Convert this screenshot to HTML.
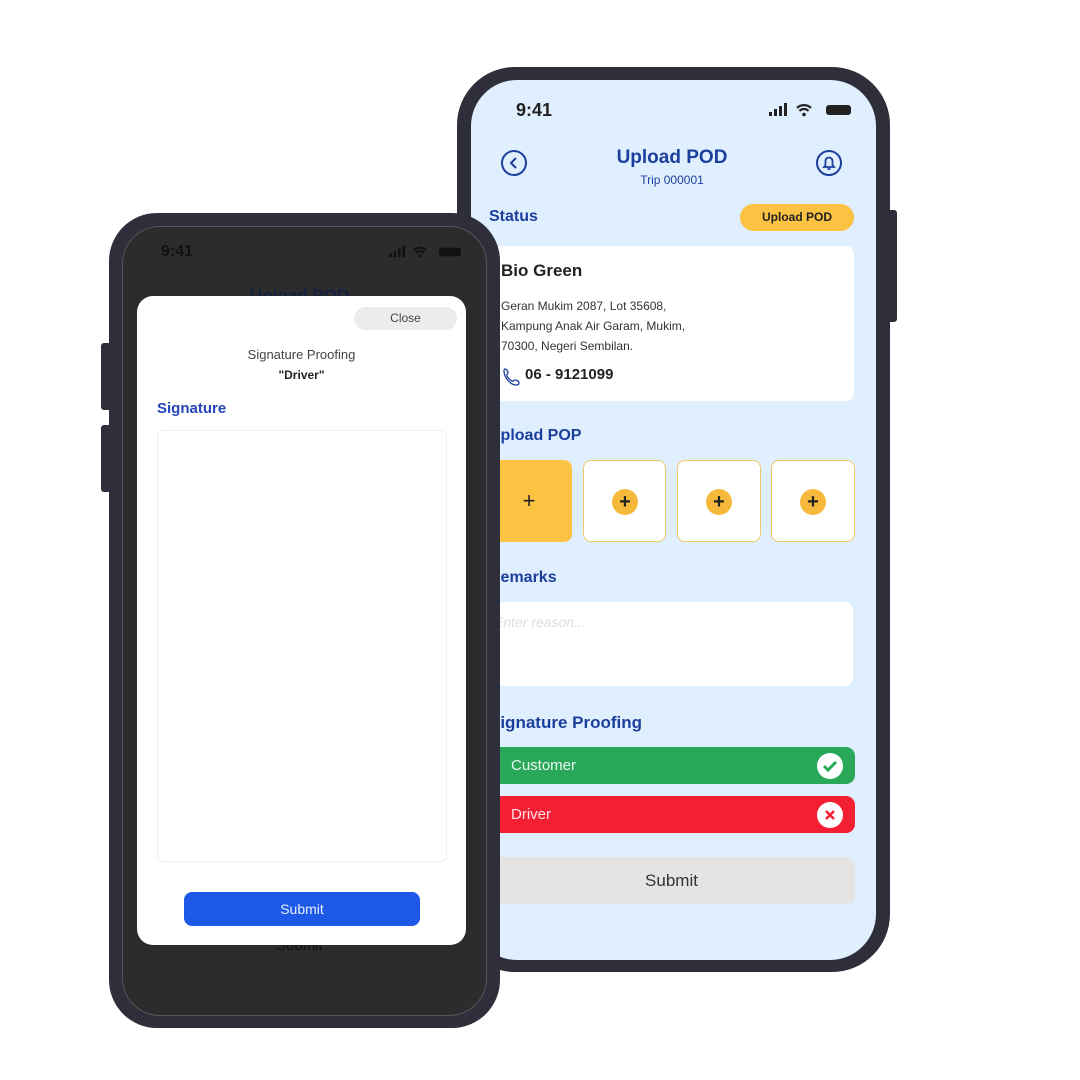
<!DOCTYPE html>
<html><head><meta charset="utf-8"><style>
*{margin:0;padding:0;box-sizing:border-box}
body{width:1080px;height:1080px;background:#fff;position:relative;overflow:hidden;font-family:"Liberation Sans",sans-serif}
.a{position:absolute}
.blue{color:#1c3f9e;font-weight:bold}
</style></head><body>
<!-- right phone -->
<div class="a" style="left:887px;top:210px;width:10px;height:112px;background:#2f2f3b;border-radius:3px"></div>
<div class="a" style="left:457px;top:67px;width:433px;height:905px;background:#2f2f3b;border-radius:58px"></div>
<div class="a" style="left:471px;top:80px;width:405px;height:880px;background:#e0effd;border-radius:46px;overflow:hidden">
</div>
<div class="a" style="left:516px;top:100px;font-size:18px;font-weight:bold;color:#222">9:41</div>
<svg class="a" style="left:768px;top:102px" width="86" height="16" viewBox="0 0 86 16"><rect x="1" y="10" width="3" height="4" fill="#222"/><rect x="6" y="7" width="3" height="7" fill="#222"/><rect x="11" y="4" width="3" height="10" fill="#222"/><rect x="16" y="1" width="3" height="13" fill="#222"/><path d="M29 6a10 10 0 0 1 14 0M31.5 9a6 6 0 0 1 9 0" stroke="#222" stroke-width="2.2" fill="none"/><circle cx="36" cy="12.5" r="1.8" fill="#222"/><rect x="58" y="3" width="25" height="10" rx="3" fill="#222"/></svg>
<svg class="a" style="left:500px;top:149px" width="28" height="28"><circle cx="14" cy="14" r="12" stroke="#1c3f9e" stroke-width="2" fill="none"/><path d="M16 9l-5 5 5 5" stroke="#1c3f9e" stroke-width="2" fill="none"/></svg>
<svg class="a" style="left:815px;top:149px" width="28" height="28"><circle cx="14" cy="14" r="12" stroke="#1c3f9e" stroke-width="2" fill="none"/><path d="M9 18h10l-1.5-2v-4a3.5 3.5 0 0 0-7 0v4z M12.5 20h3" stroke="#1c3f9e" stroke-width="1.8" fill="none"/></svg>
<div class="a blue" style="left:572px;top:147px;width:200px;text-align:center;font-size:19px">Upload POD</div>
<div class="a" style="left:572px;top:173px;width:200px;text-align:center;font-size:12px;color:#1c3f9e">Trip 000001</div>
<div class="a blue" style="left:489px;top:208px;font-size:16px">Status</div>
<div class="a" style="left:740px;top:204px;width:114px;height:27px;background:#fcc242;border-radius:14px;font-size:12px;font-weight:bold;color:#222;text-align:center;line-height:27px">Upload POD</div>
<div class="a" style="left:480px;top:246px;width:374px;height:155px;background:#fff;border-radius:8px"></div>
<div class="a" style="left:501px;top:261px;font-size:17px;font-weight:bold;color:#222">Bio Green</div>
<div class="a" style="left:501px;top:296px;font-size:12px;line-height:20px;color:#333">Geran Mukim 2087, Lot 35608,<br>Kampung Anak Air Garam, Mukim,<br>70300, Negeri Sembilan.</div>
<svg class="a" style="left:502px;top:366px" width="20" height="20"><path d="M3 3c2 0 3 3 3 4s-2 1-1 3 3 4 5 5 2-1 3-1 4 1 4 3-2 2-3 2C9 19 2 12 2 5c0-1 0-2 1-2z" stroke="#1c3f9e" stroke-width="1.3" fill="none"/></svg>
<div class="a" style="left:525px;top:366px;font-size:15px;font-weight:bold;color:#222">06 - 9121099</div>
<div class="a blue" style="left:489px;top:427px;font-size:16px">Upload POP</div>
<div class="a" style="left:486px;top:460px;width:86px;height:82px;background:#fcc242;border-radius:8px;text-align:center;line-height:82px;font-size:22px;color:#222">+</div>
<div class="a" style="left:583px;top:460px;width:83px;height:82px;background:#fff;border:1.5px solid #f0c76a;border-radius:8px"></div>
<div class="a" style="left:677px;top:460px;width:84px;height:82px;background:#fff;border:1.5px solid #f0c76a;border-radius:8px"></div>
<div class="a" style="left:771px;top:460px;width:84px;height:82px;background:#fff;border:1.5px solid #f0c76a;border-radius:8px"></div>
<div class="a" style="left:612px;top:489px;width:26px;height:26px;border-radius:50%;background:#f6b93b;text-align:center;line-height:26px;font-size:20px;font-weight:bold;color:#222">+</div>
<div class="a" style="left:706px;top:489px;width:26px;height:26px;border-radius:50%;background:#f6b93b;text-align:center;line-height:26px;font-size:20px;font-weight:bold;color:#222">+</div>
<div class="a" style="left:800px;top:489px;width:26px;height:26px;border-radius:50%;background:#f6b93b;text-align:center;line-height:26px;font-size:20px;font-weight:bold;color:#222">+</div>
<div class="a blue" style="left:489px;top:569px;font-size:16px">Remarks</div>
<div class="a" style="left:480px;top:602px;width:373px;height:84px;background:#fff;border-radius:8px"></div>
<div class="a" style="left:494px;top:614px;font-size:14px;color:#ddd;font-style:italic">Enter reason...</div>
<div class="a blue" style="left:489px;top:713px;font-size:17px">Signature Proofing</div>
<div class="a" style="left:480px;top:747px;width:375px;height:37px;background:#2aa85a;border-radius:9px"></div>
<div class="a" style="left:511px;top:757px;font-size:15px;color:#eaf7ee">Customer</div>
<svg class="a" style="left:816px;top:752px" width="28" height="28"><circle cx="14" cy="14" r="13" fill="#fff"/><path d="M8 14l4 4 8-8" stroke="#2aa85a" stroke-width="3" fill="none"/></svg>
<div class="a" style="left:480px;top:796px;width:375px;height:37px;background:#f31f33;border-radius:9px"></div>
<div class="a" style="left:511px;top:806px;font-size:15px;color:#ffe3e6">Driver</div>
<svg class="a" style="left:816px;top:801px" width="28" height="28"><circle cx="14" cy="14" r="13" fill="#fff"/><path d="M10 10l8 8M18 10l-8 8" stroke="#f31f33" stroke-width="2.5"/></svg>
<div class="a" style="left:488px;top:857px;width:367px;height:47px;background:#e4e4e4;border-radius:8px;text-align:center;line-height:47px;font-size:17px;color:#333">Submit</div>

<!-- left phone -->
<div class="a" style="left:101px;top:343px;width:10px;height:67px;background:#2f2f3b;border-radius:3px"></div>
<div class="a" style="left:101px;top:425px;width:10px;height:67px;background:#2f2f3b;border-radius:3px"></div>
<div class="a" style="left:109px;top:213px;width:391px;height:815px;background:#2f2f3b;border-radius:48px"></div>
<div class="a" style="left:122px;top:226px;width:365px;height:790px;background:#2c2c2f;border-radius:38px;border:1px solid #555"></div>
<div class="a" style="left:161px;top:243px;font-size:16px;font-weight:bold;color:#111">9:41</div>
<svg class="a" style="left:388px;top:245px" width="76" height="14" viewBox="0 0 86 16"><rect x="1" y="10" width="3" height="4" fill="#111"/><rect x="6" y="7" width="3" height="7" fill="#111"/><rect x="11" y="4" width="3" height="10" fill="#111"/><rect x="16" y="1" width="3" height="13" fill="#111"/><path d="M29 6a10 10 0 0 1 14 0M31.5 9a6 6 0 0 1 9 0" stroke="#111" stroke-width="2.2" fill="none"/><circle cx="36" cy="12.5" r="1.8" fill="#111"/><rect x="58" y="3" width="25" height="10" rx="3" fill="#111"/></svg>
<div class="a" style="left:250px;top:286px;font-size:17px;font-weight:bold;color:#14203d">Upload POD</div>
<div class="a" style="left:276px;top:937px;font-size:15px;color:#111">Submit</div>
<div class="a" style="left:137px;top:296px;width:329px;height:649px;background:#fff;border-radius:16px"></div>
<div class="a" style="left:354px;top:307px;width:103px;height:23px;background:#ececec;border-radius:12px;text-align:center;line-height:23px;font-size:12px;color:#444">Close</div>
<div class="a" style="left:137px;top:347px;width:329px;text-align:center;font-size:13px;color:#444">Signature Proofing</div>
<div class="a" style="left:137px;top:368px;width:329px;text-align:center;font-size:12px;font-weight:bold;color:#222">"Driver"</div>
<div class="a" style="left:157px;top:400px;font-size:15px;font-weight:bold;color:#2646b8">Signature</div>
<div class="a" style="left:157px;top:430px;width:290px;height:432px;border:1.5px solid #efefef;border-radius:6px"></div>
<div class="a" style="left:184px;top:892px;width:236px;height:34px;background:#1d59e6;border-radius:8px;text-align:center;line-height:34px;font-size:14px;color:#e6eeff">Submit</div>
</body></html>
